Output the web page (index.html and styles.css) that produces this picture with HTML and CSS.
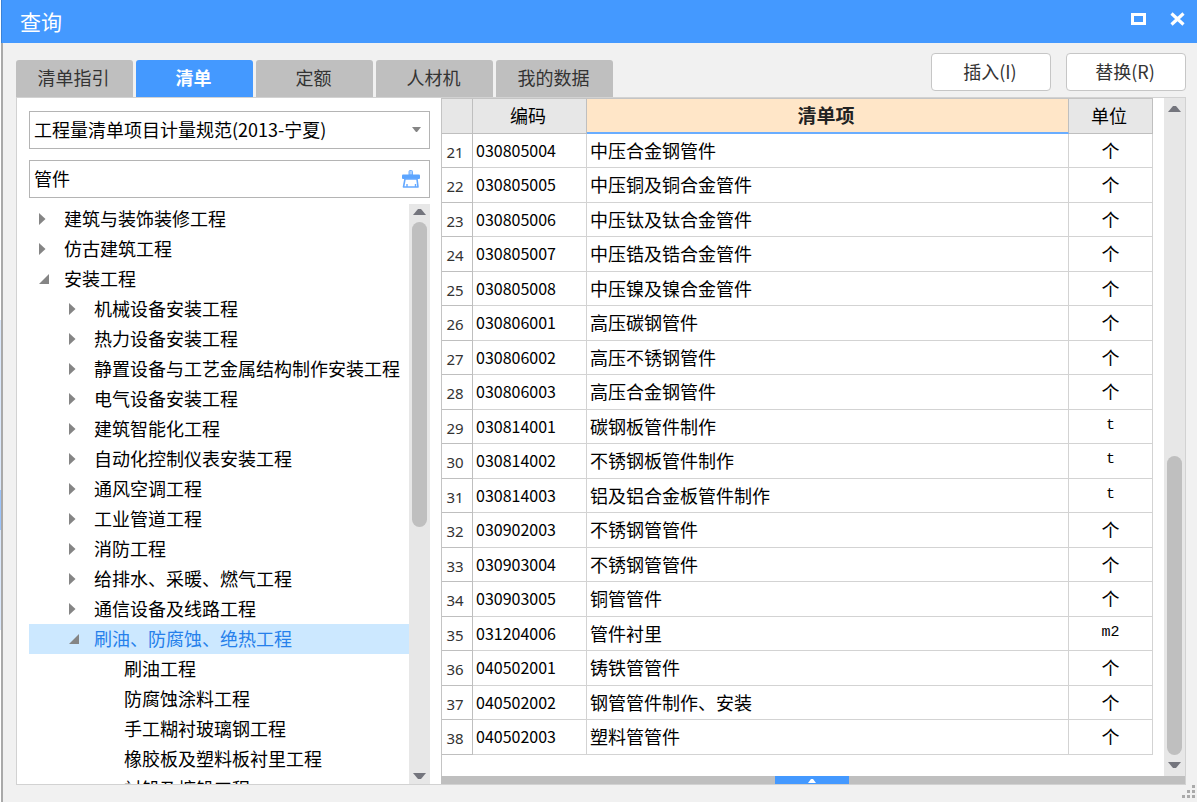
FILE: index.html
```html
<!DOCTYPE html>
<html lang="zh-CN">
<head>
<meta charset="utf-8">
<title>查询</title>
<link rel="stylesheet" href="styles.css">
</head>
<body>
<main class="window">
  <header class="titlebar">
    <h1 class="title">查询</h1>
    <div class="window-controls">
      <button class="icon-button" type="button" aria-label="最大化"><svg width="16" height="16" viewBox="0 0 16 16"><rect x="1.5" y="2.5" width="12" height="9" fill="none" stroke="#fff" stroke-width="3"/></svg></button>
      <button class="icon-button" type="button" aria-label="关闭"><svg width="16" height="16" viewBox="0 0 16 16"><path d="M1.500 1.500l12 11M13.500 1.500l-12 11" fill="none" stroke="#fff" stroke-width="3.200"/></svg></button>
    </div>
  </header>
  <div class="toolbar">
    <nav class="tabs">
      <button class="tab" type="button">清单指引</button>
      <button class="tab tab-active" type="button">清单</button>
      <button class="tab" type="button">定额</button>
      <button class="tab" type="button">人材机</button>
      <button class="tab" type="button">我的数据</button>
    </nav>
    <div class="actions">
      <button class="action" type="button">插入(I)</button>
      <button class="action" type="button">替换(R)</button>
    </div>
  </div>
  <div class="panel">
    <aside class="sidebar">
      <div class="field">
        <select class="control" aria-label="计量规范"><option>工程量清单项目计量规范(2013-宁夏)</option></select>
        <svg class="select-arrow" width="10" height="6" viewBox="0 0 10 6"><path d="M0 0h9L5 5H4z" fill="#858585"/></svg>
      </div>
      <div class="field">
        <input class="control" type="text" aria-label="搜索清单" value="管件">
        <button class="clear" type="button" aria-label="清除"><svg width="20" height="20" viewBox="0 0 20 20"><path d="M8 6V2.500q0-1 1-1h1.500q1 0 1 1V6z" fill="#a9d0ff" stroke="#6faeff"/><path d="M2 5.500h16q1 0 1 1v2.500q0 1-1 1H2q-1 0-1-1V6.500q0-1 1-1z" fill="#5ca5ff"/><path d="M4 10h12l1 8H2.500z" fill="#fff" stroke="#65a9ff" stroke-width="1.600" stroke-linejoin="round"/><path d="M6 18v-3M14.500 18v-3" stroke="#65a9ff" stroke-width="1.400"/></svg></button>
      </div>
      <div class="tree-area">
        <ul class="tree">
          <li class="node"><i class="closed"></i>建筑与装饰装修工程</li>
          <li class="node"><i class="closed"></i>仿古建筑工程</li>
          <li class="node"><i class="open"></i>安装工程</li>
          <li class="node level-2"><i class="closed"></i>机械设备安装工程</li>
          <li class="node level-2"><i class="closed"></i>热力设备安装工程</li>
          <li class="node level-2"><i class="closed"></i>静置设备与工艺金属结构制作安装工程</li>
          <li class="node level-2"><i class="closed"></i>电气设备安装工程</li>
          <li class="node level-2"><i class="closed"></i>建筑智能化工程</li>
          <li class="node level-2"><i class="closed"></i>自动化控制仪表安装工程</li>
          <li class="node level-2"><i class="closed"></i>通风空调工程</li>
          <li class="node level-2"><i class="closed"></i>工业管道工程</li>
          <li class="node level-2"><i class="closed"></i>消防工程</li>
          <li class="node level-2"><i class="closed"></i>给排水、采暖、燃气工程</li>
          <li class="node level-2"><i class="closed"></i>通信设备及线路工程</li>
          <li class="node level-2 selected"><i class="open"></i>刷油、防腐蚀、绝热工程</li>
          <li class="node level-3">刷油工程</li>
          <li class="node level-3">防腐蚀涂料工程</li>
          <li class="node level-3">手工糊衬玻璃钢工程</li>
          <li class="node level-3">橡胶板及塑料板衬里工程</li>
          <li class="node level-3">衬铅及搪铅工程</li>
        </ul>
        <div class="scrollbar">
          <svg width="13" height="7" viewBox="0 0 13 7"><path d="M0 7l5-6h3l5 6z" fill="#74757d"/></svg>
          <div class="track"><div class="thumb thumb-tree"></div></div>
          <svg width="13" height="7" viewBox="0 0 13 7"><path d="M0 0l5 6h3l5-6z" fill="#74757d"/></svg>
        </div>
      </div>
    </aside>
    <section class="content">
      <div class="grid-area">
        <div class="table-wrap">
          <table class="grid">
            <colgroup><col class="col-number"><col class="col-code"><col><col class="col-unit"></colgroup>
            <thead><tr><th></th><th>编码</th><th class="sorted">清单项</th><th>单位</th></tr></thead>
            <tbody>
              <tr><td>21</td><td>030805004</td><td>中压合金钢管件</td><td>个</td></tr>
              <tr><td>22</td><td>030805005</td><td>中压铜及铜合金管件</td><td>个</td></tr>
              <tr><td>23</td><td>030805006</td><td>中压钛及钛合金管件</td><td>个</td></tr>
              <tr><td>24</td><td>030805007</td><td>中压锆及锆合金管件</td><td>个</td></tr>
              <tr><td>25</td><td>030805008</td><td>中压镍及镍合金管件</td><td>个</td></tr>
              <tr><td>26</td><td>030806001</td><td>高压碳钢管件</td><td>个</td></tr>
              <tr><td>27</td><td>030806002</td><td>高压不锈钢管件</td><td>个</td></tr>
              <tr><td>28</td><td>030806003</td><td>高压合金钢管件</td><td>个</td></tr>
              <tr><td>29</td><td>030814001</td><td>碳钢板管件制作</td><td class="latin">t</td></tr>
              <tr><td>30</td><td>030814002</td><td>不锈钢板管件制作</td><td class="latin">t</td></tr>
              <tr><td>31</td><td>030814003</td><td>铝及铝合金板管件制作</td><td class="latin">t</td></tr>
              <tr><td>32</td><td>030902003</td><td>不锈钢管管件</td><td>个</td></tr>
              <tr><td>33</td><td>030903004</td><td>不锈钢管管件</td><td>个</td></tr>
              <tr><td>34</td><td>030903005</td><td>铜管管件</td><td>个</td></tr>
              <tr><td>35</td><td>031204006</td><td>管件衬里</td><td class="latin">m2</td></tr>
              <tr><td>36</td><td>040502001</td><td>铸铁管管件</td><td>个</td></tr>
              <tr><td>37</td><td>040502002</td><td>钢管管件制作、安装</td><td>个</td></tr>
              <tr><td>38</td><td>040502003</td><td>塑料管管件</td><td>个</td></tr>
            </tbody>
          </table>
        </div>
        <div class="scrollbar scrollbar-grid">
          <svg width="13" height="7" viewBox="0 0 13 7"><path d="M0 7l5-6h3l5 6z" fill="#74757d"/></svg>
          <div class="track track-end"><div class="thumb thumb-grid"></div></div>
          <svg width="13" height="7" viewBox="0 0 13 7"><path d="M0 0l5 6h3l5-6z" fill="#74757d"/></svg>
        </div>
      </div>
      <div class="splitter">
        <button class="expand" type="button" aria-label="展开"><svg width="8" height="5" viewBox="0 0 8 5"><path d="M0 5l3-4h2l3 4z" fill="#fff"/></svg></button>
      </div>
    </section>
  </div>
  <svg class="grip" width="13" height="13" viewBox="0 0 13 13"><path d="M10 0h3v3h-3zM5 5h3v3H5zM10 5h3v3h-3zM0 10h3v3H0zM5 10h3v3H5zM10 10h3v3h-3z" fill="#aaa"/></svg>
</main>
</body>
</html>
```
FILE: styles.css
```css
* {
  box-sizing: border-box;
}

body {
  margin: 0;
  background: linear-gradient(#fff 0 320px, #dbe8fb 320px 490px, #9cc4fb 490px 530px, #dbe8fb 530px 630px, #fff 630px);
  color: #000;
  font: 18px/30px "Noto Sans CJK SC", sans-serif;
}

button,
input,
select {
  margin: 0;
  padding: 0;
  border: 0;
  color: inherit;
  font: inherit;
}

.window {
  position: relative;
  display: flex;
  flex-direction: column;
  height: 100vh;
  min-height: 480px;
  margin-left: 1px;
  border-left: 2px solid #a9a9a9;
  background: #f1f1f1;
  padding-bottom: 17px;
}

.titlebar {
  display: flex;
  flex: none;
  align-items: center;
  justify-content: space-between;
  height: 43px;
  margin-left: -2px;
  padding: 0 11px 4px 18px;
  border-left: 1px solid #3b82d6;
  background: #4499ff;
  color: #fff;
}

.title {
  margin: 0;
  padding-top: 2px;
  font-size: 21px;
  font-weight: 400;
}

.window-controls {
  display: flex;
  gap: 23px;
}

.icon-button {
  display: flex;
  background: transparent;
}

.toolbar {
  display: flex;
  flex: none;
  align-items: flex-end;
  justify-content: space-between;
  height: 54px;
  padding: 0 11px 0 13px;
}

.tabs {
  display: flex;
  gap: 3px;
}

.tab {
  width: 117px;
  height: 37px;
  padding: 0 2px 3px 0;
  border-radius: 3px 3px 0 0;
  background: #bfbfbf;
  color: #333;
}

.tab-active {
  background: #4499ff;
  color: #fff;
  font-weight: 700;
}

.actions {
  display: flex;
  gap: 15px;
  padding-bottom: 6px;
}

.action {
  width: 120px;
  height: 38px;
  padding: 0 2px 2px 0;
  border: 1px solid #c6c6c6;
  border-radius: 4px;
  background: #fff;
  color: #333;
}

.panel {
  display: flex;
  flex: 1;
  min-height: 0;
  margin: 0 11px 0 13px;
  border: 1px solid #d2d2d2;
  background: #fff;
}

.sidebar {
  display: flex;
  flex: none;
  flex-direction: column;
  width: 424px;
  padding: 13px 11px 0 12px;
}

.field {
  position: relative;
  flex: none;
  height: 38px;
  margin-bottom: 11px;
  border: 1px solid #b4b4b4;
}

.field + .field {
  margin-bottom: 6px;
}

.control {
  width: 100%;
  height: 100%;
  padding: 0 36px 2px 4px;
  background: #fff;
  appearance: none;
  outline: 0;
}

.select-arrow {
  position: absolute;
  top: 15px;
  right: 7px;
  pointer-events: none;
}

.clear {
  position: absolute;
  top: 8px;
  right: 8px;
  display: flex;
  background: transparent;
}

.tree-area {
  display: flex;
  flex: 1;
  min-height: 0;
}

.tree {
  flex: 1;
  min-width: 0;
  margin: 0;
  padding: 0;
  overflow: hidden;
  list-style: none;
}

.node {
  display: flex;
  align-items: center;
  height: 30px;
  padding: 0 0 2px 10px;
  white-space: nowrap;
}

.level-2 {
  padding-left: 40px;
}

.level-3 {
  padding-left: 95px;
}

.selected {
  background: #cce8ff;
  color: #2680eb;
}

.closed,
.open {
  flex: none;
  width: 10px;
  height: 12px;
  margin: 2px 15px 0 0;
  background: #858585;
}

.closed {
  clip-path: polygon(0 0, 65% 50%, 0 100%);
}

.open {
  height: 10px;
  clip-path: polygon(100% 0, 100% 100%, 0 100%);
}

.scrollbar {
  display: flex;
  flex: none;
  flex-direction: column;
  align-items: center;
  gap: 7px;
  width: 21px;
  padding: 4px 0;
  background: #e7e7e7;
}

.scrollbar-grid {
  padding: 7px 0;
}

.track {
  display: flex;
  flex: 1;
  flex-direction: column;
  width: 15px;
  min-height: 0;
}

.track-end {
  justify-content: flex-end;
}

.thumb {
  border-radius: 8px;
  background: #bfbfbf;
}

.thumb-tree {
  height: 56%;
}

.thumb-grid {
  height: 47%;
}

.content {
  display: flex;
  flex: 1;
  flex-direction: column;
  min-width: 0;
}

.grid-area {
  display: flex;
  flex: 1;
  gap: 11px;
  min-height: 0;
}

.table-wrap {
  flex: 1;
  overflow: hidden;
  border-left: 1px solid #c4c4c4;
}

.grid {
  width: 100%;
  border-top: 1px solid #c4c4c4;
  border-spacing: 0;
  table-layout: fixed;
}

.col-number {
  width: 31px;
}

.col-code {
  width: 114px;
}

.col-unit {
  width: 84px;
}

.grid th,
.grid td {
  height: 34px;
  padding: 0 3px 2px;
  border-right: 1px solid #d3d3d3;
  border-bottom: 1px solid #d3d3d3;
  font-weight: 400;
  line-height: 30px;
  vertical-align: middle;
  white-space: nowrap;
}

.grid th {
  height: 35px;
  padding-right: 6px;
  border-color: #bfbfbf;
  background: #e7e7e7;
}

.grid .sorted {
  border-bottom: 2px solid #69adff;
  background: #ffe6c8;
  color: #222;
  font-size: 19px;
  font-weight: 700;
}

.grid tr:nth-child(even) td {
  height: 35px;
}

.grid td:first-child {
  padding: 2px 4px 0 0;
  border-color: #bfbfbf;
  color: #333;
  font: 15px/28px "Noto Sans", sans-serif;
  text-align: center;
}

.grid td:nth-child(2) {
  padding-left: 3px;
  font-size: 16px;
}

.grid td:last-child {
  text-align: center;
}

.grid .latin {
  font: 15px/30px "Liberation Mono", monospace;
}

.splitter {
  display: flex;
  flex: none;
  justify-content: center;
  height: 8px;
  padding-right: 2px;
  background: #bfbfbf;
}

.expand {
  display: flex;
  align-items: center;
  justify-content: center;
  width: 74px;
  background: #4499ff;
}

.grip {
  position: absolute;
  right: 2px;
  bottom: 4px;
}
```
